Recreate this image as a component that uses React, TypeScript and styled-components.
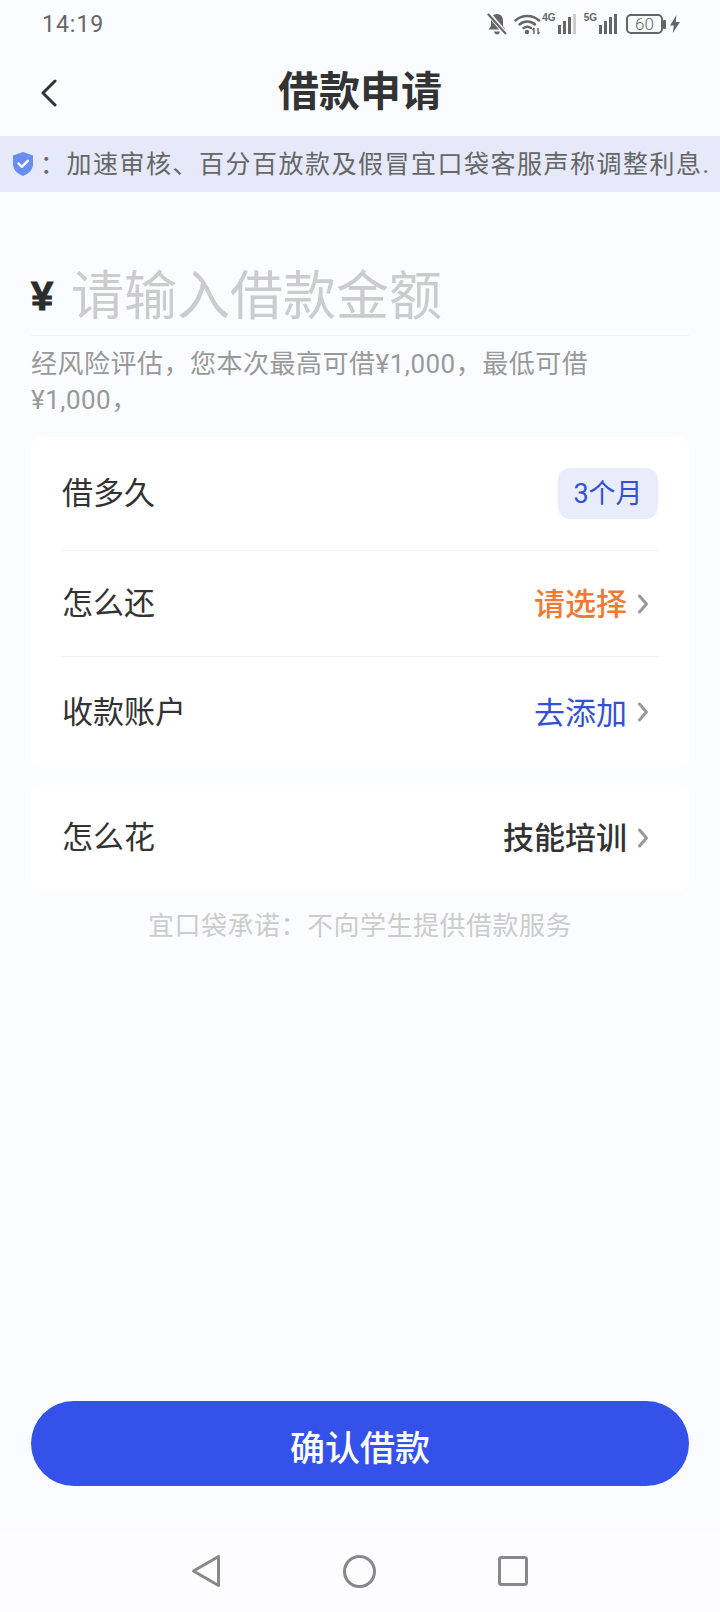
import styled, { createGlobalStyle } from 'styled-components'

const GlobalStyle = createGlobalStyle`
  html,
  body {
    margin: 0;
    padding: 0;
    background: #fbfcff;
  }

  * {
    box-sizing: border-box;
  }
`

const Page = styled.div`
  display: flex;
  flex-direction: column;
  width: 720px;
  height: 1612px;
  overflow: hidden;
  background: #fbfcff;
  color: #333;
  font-family: Roboto, 'Noto Sans CJK SC', sans-serif;
`

const StatusBar = styled.div`
  display: flex;
  align-items: center;
  justify-content: space-between;
  height: 48px;
  padding: 0 40px 0 42px;
  color: #666;
`

const Time = styled.span`
  font-size: 23px;
  letter-spacing: 1px;
`

const StatusIcons = styled.div`
  display: flex;
  align-items: center;
`

const Signal = styled.div<{ $gap: number }>`
  display: flex;
  align-items: flex-start;
  margin-left: ${({ $gap }) => $gap}px;
`

const SignalLabel = styled.span`
  font-family: 'Liberation Sans', sans-serif;
  font-size: 10px;
  font-weight: 700;
  line-height: 10px;
`

const Battery = styled.div`
  display: flex;
  align-items: center;
  justify-content: center;
  width: 37px;
  height: 20px;
  margin-left: 7px;
  border: 2px solid #666;
  border-radius: 5px;
  font-size: 17px;
  font-weight: 300;
  line-height: 1;
`

const BatteryCap = styled.div`
  width: 3px;
  height: 9px;
  margin: 0 4px 0 0;
  border-radius: 1px;
  background: #666;
`

const NavBar = styled.div`
  position: relative;
  display: flex;
  align-items: center;
  justify-content: center;
  height: 88px;
`

const BackButton = styled.div`
  position: absolute;
  top: 31px;
  left: 39px;
  display: flex;
`

const Title = styled.h1`
  margin: 0;
  color: #333;
  font-size: 41px;
  font-weight: 700;
  line-height: 56px;
`

const Notice = styled.div`
  display: flex;
  align-items: center;
  height: 56px;
  padding-left: 13px;
  overflow: hidden;
  background: #e5e9fa;
  color: #666;
  font-size: 25px;
  white-space: nowrap;
`

const NoticeText = styled.span`
  margin: 0 0 5px 7px;
  letter-spacing: 1.5px;
`

const Amount = styled.div`
  display: flex;
  align-items: center;
  height: 78px;
  margin: 66px 31px 0;
  border-bottom: 1px solid #eff1f5;
`

const Yen = styled.span`
  width: 40px;
  font-family: 'Liberation Sans', sans-serif;
  font-size: 40px;
  font-weight: 700;
  color: #2c2c2c;
  -webkit-text-stroke: 1px #2c2c2c;
`

const Placeholder = styled.span`
  color: #ccc;
  font-size: 53px;
  line-height: 72px;
`

const Hint = styled.p`
  width: 580px;
  margin: 10px 0 0 31px;
  color: #999;
  font-size: 26px;
  letter-spacing: 0.5px;
  line-height: 36px;
`

const Card = styled.section<{ $top: number }>`
  margin: ${({ $top }) => $top}px 31px 0;
  padding: 0 31px;
  border-radius: 12px;
  background: #fff;
`

const Row = styled.div<{ $height: number; $divider?: boolean }>`
  display: flex;
  align-items: center;
  justify-content: space-between;
  height: ${({ $height }) => $height}px;
  border-bottom: ${({ $divider }) => ($divider ? '1px solid #f0f0f0' : 'none')};
`

const Label = styled.span`
  margin-bottom: 6px;
  color: #333;
  font-size: 31px;
`

const Value = styled.div<{ $color: string; $weight?: number }>`
  display: flex;
  align-items: center;
  gap: 10px;
  padding-right: 9px;
  color: ${({ $color }) => $color};
  font-size: 31px;
  font-weight: ${({ $weight }) => $weight ?? 500};
`

const ValueText = styled.span`
  margin-bottom: 4px;
`

const Badge = styled.span`
  display: flex;
  align-items: center;
  justify-content: center;
  width: 100px;
  height: 51px;
  padding-bottom: 5px;
  border-radius: 12px;
  background: #e9edfb;
  color: #3450d8;
  font-size: 27px;
`

const Pledge = styled.p`
  margin: 19px 0 0;
  color: #ccc;
  font-size: 26px;
  letter-spacing: 0.5px;
  line-height: 35px;
  text-align: center;
`

const SubmitButton = styled.button`
  flex: none;
  height: 85px;
  margin: auto 31px 0;
  padding: 4px 0 0;
  border: none;
  border-radius: 43px;
  background: #3452e9;
  color: #fff;
  font-family: inherit;
  font-size: 35px;
  font-weight: 500;
`

const SystemNav = styled.div`
  display: flex;
  align-items: center;
  justify-content: center;
  gap: 122px;
  height: 82px;
  margin-top: 44px;
  padding-right: 2px;
  background: #fdfdff;
`

function Chevron() {
  return (
    <svg width="12" height="22" viewBox="0 0 12 22" fill="none">
      <path d="M2.500 3l7 8-7 8" stroke="#999" strokeWidth="3" strokeLinecap="round" strokeLinejoin="round" />
    </svg>
  )
}

function Bars({ width, level }: { width: number; level: number }) {
  const heights = [5, 9, 13, 17, 20]
  return (
    <svg width={width} height="22" viewBox={`0 0 ${width} 22`}>
      {heights.map((h, i) => (
        <rect
          key={h}
          x={width - 5 * (5 - i)}
          y={21 - h}
          width="3"
          height={h}
          fill={i < level ? '#666' : '#ccc'}
        />
      ))}
    </svg>
  )
}

export default function App() {
  return (
    <Page>
      <GlobalStyle />
      <StatusBar>
        <Time>14:19</Time>
        <StatusIcons>
          <svg width="22" height="24" viewBox="0 0 22 24" fill="none">
            <path d="M11 2c-4 0-6 3-6 7v5l-2.500 3.500h17L17 14V9c0-4-2-7-6-7z" fill="#666" />
            <path d="M8 19.500c.5 2 1.500 3 3 3s2.500-1 3-3z" fill="#666" />
            <path d="M2 1l18 21" stroke="#fbfcff" strokeWidth="4.500" />
            <path d="M2 2l18 20" stroke="#666" strokeWidth="2" />
          </svg>
          <svg style={{ marginLeft: 6 }} width="27" height="22" viewBox="0 0 27 22" fill="none">
            <path d="M1.500 7.500c6.500-6 17-6 23.500 0" stroke="#666" strokeWidth="2.400" strokeLinecap="round" />
            <path d="M5.500 11.500c4.500-4 11-4 15.500 0" stroke="#666" strokeWidth="2.400" strokeLinecap="round" />
            <path d="M9.500 15c2.500-1.800 5-1.800 7.500 0" stroke="#666" strokeWidth="2.400" strokeLinecap="round" />
            <circle cx="13" cy="19" r="2.200" fill="#666" />
            <path d="M20 15v6M18.500 17l1.500-2M24 15v6M25.500 19l-1.500 2" stroke="#666" strokeWidth="1.400" />
          </svg>
          <Signal $gap={1}>
            <SignalLabel>4G</SignalLabel>
            <Bars width={22} level={4} />
          </Signal>
          <Signal $gap={6}>
            <SignalLabel>5G</SignalLabel>
            <Bars width={22} level={5} />
          </Signal>
          <Battery>60</Battery>
          <BatteryCap />
          <svg width="10" height="18" viewBox="0 0 10 18">
            <path d="M6.500 0L0 10.500h3.800L2.800 18 10 7H5.800z" fill="#666" />
          </svg>
        </StatusIcons>
      </StatusBar>

      <NavBar>
        <BackButton>
          <svg width="20" height="28" viewBox="0 0 20 28" fill="none">
            <path d="M16 2L4 14l12 12" stroke="#333" strokeWidth="3" strokeLinecap="round" strokeLinejoin="round" />
          </svg>
        </BackButton>
        <Title>借款申请</Title>
      </NavBar>

      <Notice>
        <svg width="20" height="24" viewBox="0 0 20 24">
          <path d="M10 0l10 3.500v9c0 5.500-4.500 9-10 11.500C4.500 21.500 0 18 0 12.500v-9z" fill="#6a8cf0" />
          <path d="M5.500 11.500l3.300 3.300 6-6" fill="none" stroke="#fff" strokeWidth="2.400" strokeLinecap="round" strokeLinejoin="round" />
        </svg>
        <NoticeText>：加速审核、百分百放款及假冒宜口袋客服声称调整利息.</NoticeText>
      </Notice>

      <Amount>
        <Yen>¥</Yen>
        <Placeholder>请输入借款金额</Placeholder>
      </Amount>
      <Hint>经风险评估，您本次最高可借¥1,000，最低可借¥1,000，</Hint>

      <Card $top={19}>
        <Row $height={114} $divider>
          <Label>借多久</Label>
          <Badge>3个月</Badge>
        </Row>
        <Row $height={106} $divider>
          <Label>怎么还</Label>
          <Value $color="#ee7a35">
            <ValueText>请选择</ValueText>
            <Chevron />
          </Value>
        </Row>
        <Row $height={110}>
          <Label>收款账户</Label>
          <Value $color="#3450d8" $weight={400}>
            <ValueText>去添加</ValueText>
            <Chevron />
          </Value>
        </Row>
      </Card>

      <Card $top={18}>
        <Row $height={105}>
          <Label>怎么花</Label>
          <Value $color="#333">
            <ValueText>技能培训</ValueText>
            <Chevron />
          </Value>
        </Row>
      </Card>

      <Pledge>宜口袋承诺：不向学生提供借款服务</Pledge>

      <SubmitButton type="button">确认借款</SubmitButton>

      <SystemNav>
        <svg width="30" height="34" viewBox="0 0 30 34" fill="none">
          <path d="M27.500 2.500v29L2.500 17z" stroke="#888" strokeWidth="3" strokeLinejoin="round" />
        </svg>
        <svg width="33" height="33" viewBox="0 0 33 33" fill="none">
          <circle cx="16.500" cy="16.500" r="15" stroke="#888" strokeWidth="3" />
        </svg>
        <svg width="30" height="30" viewBox="0 0 30 30" fill="none">
          <rect x="1.500" y="1.500" width="27" height="27" rx="2" stroke="#888" strokeWidth="3" />
        </svg>
      </SystemNav>
    </Page>
  )
}
